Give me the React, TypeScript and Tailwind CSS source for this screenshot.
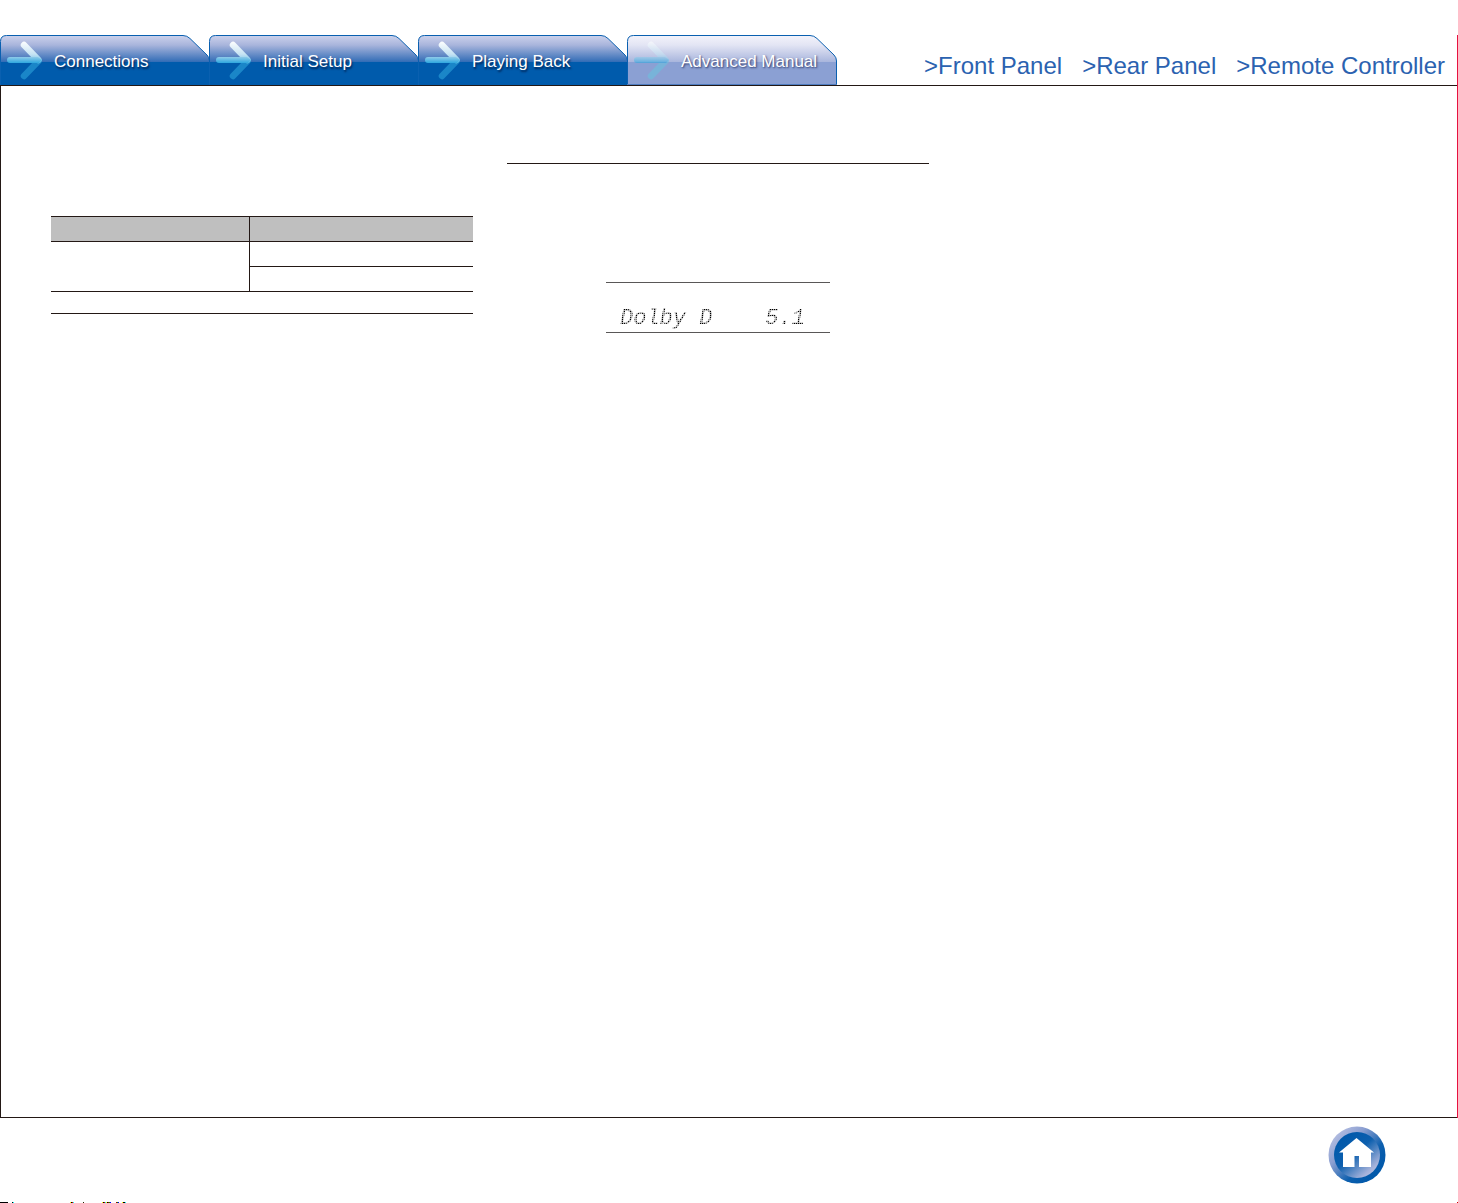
import React from 'react';
import clsx from 'clsx';

interface Tab {
  id: string;
  label: string;
  active?: boolean;
}

const tabs: Tab[] = [
  { id: 'connections', label: 'Connections' },
  { id: 'setup', label: 'Initial Setup' },
  { id: 'playback', label: 'Playing Back' },
  { id: 'advanced', label: 'Advanced Manual', active: true },
];

const panelLinks = ['Front Panel', 'Rear Panel', 'Remote Controller'];

// Leftover marks of the clipped footer line: [x, width, colour]
const footerMarks: [number, number, string][] = [
  [0, 8, '#000'],
  [12, 1, '#000'],
  [13, 1, '#0ff'],
  [70, 1, '#ff0'],
  [71, 1, '#000'],
  [72, 1, '#c00'],
  [73, 1, '#0ff'],
  [83, 1, '#220'],
  [102, 1, '#ff0'],
  [103, 1, '#000'],
  [104, 1, '#c00'],
  [105, 1, '#0ff'],
  [106, 1, '#ff0'],
  [107, 1, '#000'],
  [108, 1, '#800'],
  [109, 1, '#080'],
  [110, 1, '#00f'],
  [116, 1, '#a00'],
  [117, 1, '#080'],
  [118, 1, '#00f'],
  [122, 1, '#ff0'],
  [123, 2, '#000'],
  [125, 1, '#0ff'],
];

const TAB_SHAPE = 'M0.5 51V6.5Q0.5 0.5 6.5 0.5H183Q187 0.5 190 3.5L207 20Q209.5 22.5 209.5 26V51';

const TabBackground: React.FC<{ id: string; active?: boolean }> = ({ id, active }) => (
  <svg className="absolute top-0 left-0 w-[210px] h-[50px]" viewBox="0 0 210 50" aria-hidden="true">
    <defs>
      <linearGradient id={`${id}-bg`} gradientUnits="userSpaceOnUse" x1="0" y1="0" x2="0" y2="50">
        <stop offset="0" stopColor={active ? '#f4f4fb' : '#ced3ec'} />
        <stop offset="0.2" stopColor={active ? '#e3e5f4' : '#a9b5dc'} />
        <stop offset="0.55" stopColor={active ? '#a7b4dc' : '#2e6ab5'} />
        <stop offset="0.55" stopColor={active ? '#8ba0d3' : '#005bac'} />
        <stop offset="1" stopColor={active ? '#8ba0d3' : '#005bac'} />
      </linearGradient>
      <linearGradient id={`${id}-upper`} gradientUnits="userSpaceOnUse" x1="0" y1="6" x2="0" y2="28">
        <stop offset="0" stopColor="#ffffff" />
        <stop offset="0.6" stopColor="#c6e3f3" />
        <stop offset="1" stopColor="#5fbbe5" />
      </linearGradient>
      <linearGradient id={`${id}-shaft`} gradientUnits="userSpaceOnUse" x1="0" y1="22" x2="0" y2="28">
        <stop offset="0" stopColor="#8fcbe9" />
        <stop offset="1" stopColor="#2ea7df" />
      </linearGradient>
    </defs>
    <path d={TAB_SHAPE} fill={`url(#${id}-bg)`} stroke="#0a60b0" />
    {active && <path d="M0 49.5H210" stroke="#4f7dc0" />}
    <g fill="none" strokeWidth="6.5" strokeLinecap="round" strokeLinejoin="round" opacity={active ? 0.6 : 1}>
      <path d="M24 41L38.500 26" stroke={active ? '#6cc0dd' : '#1a86c8'} />
      <path d="M24 10L38.500 25" stroke={`url(#${id}-upper)`} />
      <path d="M7 25Q7 22 10 22H38L42 25L39 28H10Q7 28 7 25Z" fill={`url(#${id}-shaft)`} stroke="none" />
    </g>
  </svg>
);

const ManualTab: React.FC<{ tab: Tab }> = ({ tab }) => (
  <a
    href={`#${tab.id}`}
    aria-current={tab.active ? 'page' : undefined}
    className="relative block w-[209px] h-[50px] shrink-0"
  >
    <TabBackground id={tab.id} active={tab.active} />
    <span
      className={clsx(
        'relative block pl-[54px] pt-[15px] text-[17px] leading-6 text-white whitespace-nowrap',
        tab.active
          ? '[text-shadow:1px_1px_2px_rgba(30,40,90,0.85)]'
          : '[text-shadow:1px_2px_2px_rgba(0,20,60,0.75)]'
      )}
    >
      {tab.label}
    </span>
  </a>
);

const HomeIcon: React.FC = () => (
  <svg className="w-[58px] h-[58px]" viewBox="0 0 58 58" aria-hidden="true">
    <defs>
      <linearGradient id="home-ring" x1="0.1" y1="0.15" x2="0.85" y2="0.85">
        <stop offset="0" stopColor="#b3bde1" />
        <stop offset="0.3" stopColor="#8c9fd1" />
        <stop offset="0.7" stopColor="#0c5fae" />
        <stop offset="1" stopColor="#0058aa" />
      </linearGradient>
      <linearGradient id="home-disc" x1="0.15" y1="0.1" x2="0.85" y2="0.9">
        <stop offset="0" stopColor="#0058aa" />
        <stop offset="0.45" stopColor="#0c5fae" />
        <stop offset="0.9" stopColor="#a3b1da" />
        <stop offset="1" stopColor="#b3bde1" />
      </linearGradient>
    </defs>
    <circle cx="29" cy="29" r="28.5" fill="url(#home-ring)" />
    <circle cx="29" cy="29" r="23" fill="url(#home-disc)" />
    <path d="M28.5 12L46 26.5H43V41H31V30H26.5V41H15V26.5H11Z" fill="#fff" />
  </svg>
);

const SettingsTable: React.FC = () => (
  <table className="w-full mt-[130px] table-fixed border-separate border-spacing-0 border-t border-[#231815]">
    <thead>
      <tr className="h-[25px] bg-[#bfbfbf]">
        <th className="w-[199px] p-0 border-b border-r border-[#231815]" />
        <th className="p-0 border-b border-[#231815]" />
      </tr>
    </thead>
    <tbody>
      <tr className="h-[25px]">
        <td rowSpan={2} className="p-0 border-b border-r border-[#231815]" />
        <td className="p-0 border-b border-[#231815]" />
      </tr>
      <tr className="h-[25px]">
        <td className="p-0 border-b border-[#231815]" />
      </tr>
      <tr className="h-[22px]">
        <td colSpan={2} className="p-0 border-b border-[#231815]" />
      </tr>
    </tbody>
  </table>
);

export default function App() {
  return (
    <div className="min-h-screen flex flex-col bg-white font-['Liberation_Sans',Arial,sans-serif]">
      <div className="flex-1 flex flex-col mt-[35px] border-r border-[#e6123f]">
        <header className="flex justify-between border-b border-[#231815]">
          <nav className="flex" aria-label="Manual sections">
            {tabs.map((tab) => (
              <ManualTab key={tab.id} tab={tab} />
            ))}
          </nav>
          <nav className="flex items-end gap-5 pr-3 pb-[3px]" aria-label="Panels">
            {panelLinks.map((label) => (
              <a key={label} href="#panel" className="text-2xl text-[#2b62b0] whitespace-nowrap">
                &gt;{label}
              </a>
            ))}
          </nav>
        </header>

        <main className="flex-1 grid grid-cols-3 gap-[34px] pl-[50px] pr-[72px] border-l border-b border-[#231815]">
          <section>
            <SettingsTable />
          </section>
          <section>
            <hr className="mt-[77px] border-[#231815]" />
            <div className="w-[224px] mx-auto mt-[118px] h-[51px] pl-[14px] pt-6 border-y border-[#595757]">
              {/* the mask breaks the strokes up into display dots */}
              <p className="font-['Liberation_Mono',monospace] italic text-[22px] leading-6 text-black whitespace-pre [mask-image:radial-gradient(circle_at_0.5px_0.5px,#000_0.6px,rgba(0,0,0,0.35)_1px,rgba(0,0,0,0.2)_1.4px)] [mask-size:2px_2px]">
                {'Dolby D    5.1'}
              </p>
            </div>
          </section>
          <section />
        </main>
      </div>

      <footer className="relative h-[85px] flex justify-end items-start pt-2 pr-[72px]">
        <button type="button" aria-label="Home" className="rounded-full cursor-pointer">
          <HomeIcon />
        </button>
        <svg className="absolute left-0 bottom-0 w-[130px] h-px" viewBox="0 0 130 1" aria-hidden="true">
          {footerMarks.map(([x, width, color]) => (
            <rect key={x} x={x} width={width} height="1" fill={color} />
          ))}
        </svg>
        <span className="absolute right-0 bottom-0 size-px bg-[#c00]" />
      </footer>
    </div>
  );
}
